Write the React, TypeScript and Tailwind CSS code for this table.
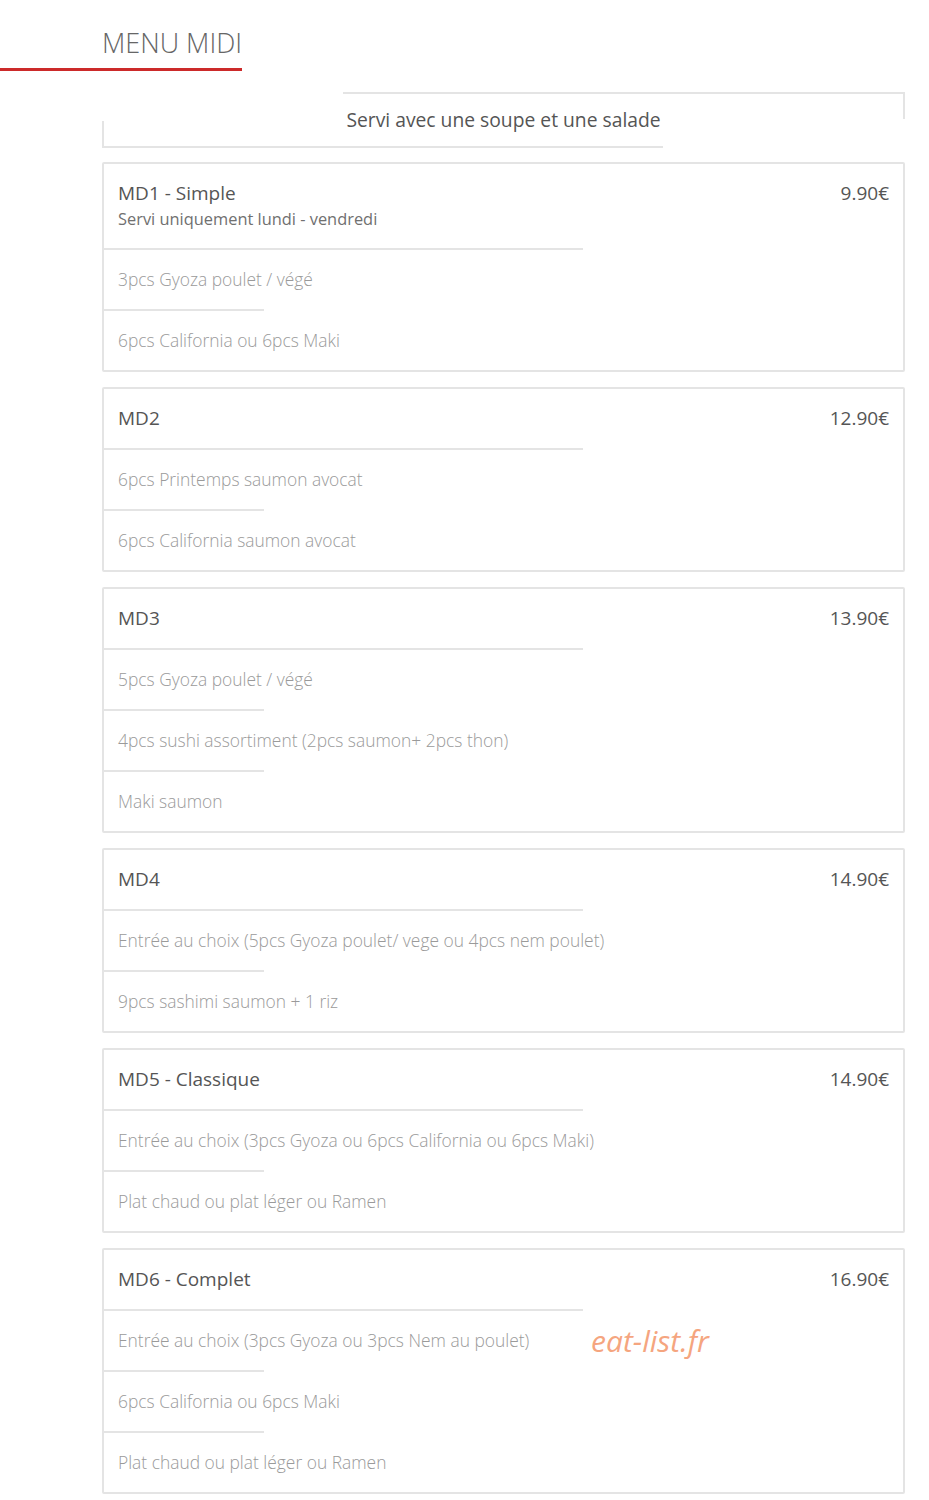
import React from 'react';

type Menu = {
  code: string;
  note?: string;
  price: string;
  items: string[];
};

const menus: Menu[] = [
  {
    code: 'MD1 - Simple',
    note: 'Servi uniquement lundi - vendredi',
    price: '9.90€',
    items: ['3pcs Gyoza poulet / végé', '6pcs California ou 6pcs Maki'],
  },
  {
    code: 'MD2',
    price: '12.90€',
    items: ['6pcs Printemps saumon avocat', '6pcs California saumon avocat'],
  },
  {
    code: 'MD3',
    price: '13.90€',
    items: ['5pcs Gyoza poulet / végé', '4pcs sushi assortiment (2pcs saumon+ 2pcs thon)', 'Maki saumon'],
  },
  {
    code: 'MD4',
    price: '14.90€',
    items: ['Entrée au choix (5pcs Gyoza poulet/ vege ou 4pcs nem poulet)', '9pcs sashimi saumon + 1 riz'],
  },
  {
    code: 'MD5 - Classique',
    price: '14.90€',
    items: ['Entrée au choix (3pcs Gyoza ou 6pcs California ou 6pcs Maki)', 'Plat chaud ou plat léger ou Ramen'],
  },
  {
    code: 'MD6 - Complet',
    price: '16.90€',
    items: ['Entrée au choix (3pcs Gyoza ou 3pcs Nem au poulet)', '6pcs California ou 6pcs Maki', 'Plat chaud ou plat léger ou Ramen'],
  },
];

const MenuCard: React.FC<{ menu: Menu }> = ({ menu }) => (
  <div className="rounded-[2px] border-2 border-[#e4e4e4] bg-white">
    <div className="flex justify-between px-[14px] pt-[17px] pb-[18px]">
      <div>
        <div className="text-[19px] leading-[24px] text-[#555]">{menu.code}</div>
        {menu.note && <div className="mt-[3px] text-[16.4px] leading-[22px] text-[#707070]">{menu.note}</div>}
      </div>
      <div className="text-[19px] leading-[24px] text-[#555]">{menu.price}</div>
    </div>
    {menu.items.map((item, i) => (
      <div key={i}>
        <div className={`h-[2px] bg-[#e4e4e4] ${i === 0 ? 'w-[60%]' : 'w-[20%]'}`} />
        <div className="flex h-[59px] items-center px-[14px] text-[17.4px] font-light text-[#9a9a9a]">{item}</div>
      </div>
    ))}
  </div>
);

export default function App() {
  return (
    <div className="relative min-h-[1500px] bg-white pt-[25px] font-['Open_Sans',sans-serif]">
      {/* title */}
      <div className="inline-block border-b-[3px] border-[#cc2a2a] pl-[102px] pb-[7px]">
        <h1 className="text-[27px] leading-[36px] font-light text-[#666]">MENU MIDI</h1>
      </div>

      <div className="ml-[102px] w-[803px]">
        {/* notice box with broken border */}
        <div className="relative mt-[21px] flex h-[56px] items-center justify-center text-[19.3px] text-[#555]">
          <span className="absolute top-0 right-0 left-[241px] h-[2px] bg-[#e4e4e4]" />
          <span className="absolute top-0 right-0 h-[27px] w-[2px] bg-[#e4e4e4]" />
          <span className="absolute bottom-0 left-0 h-[27px] w-[2px] bg-[#e4e4e4]" />
          <span className="absolute bottom-0 left-0 h-[2px] w-[561px] bg-[#e4e4e4]" />
          <span>Servi avec une soupe et une salade</span>
        </div>

        <div className="mt-[14px] flex flex-col gap-[15px]">
          {menus.map((m) => (
            <MenuCard key={m.code} menu={m} />
          ))}
        </div>
      </div>

      {/* watermark */}
      <div className="absolute top-[1318px] left-[591px] text-[30px] italic text-[#f5a57f]">eat-list.fr</div>
    </div>
  );
}
